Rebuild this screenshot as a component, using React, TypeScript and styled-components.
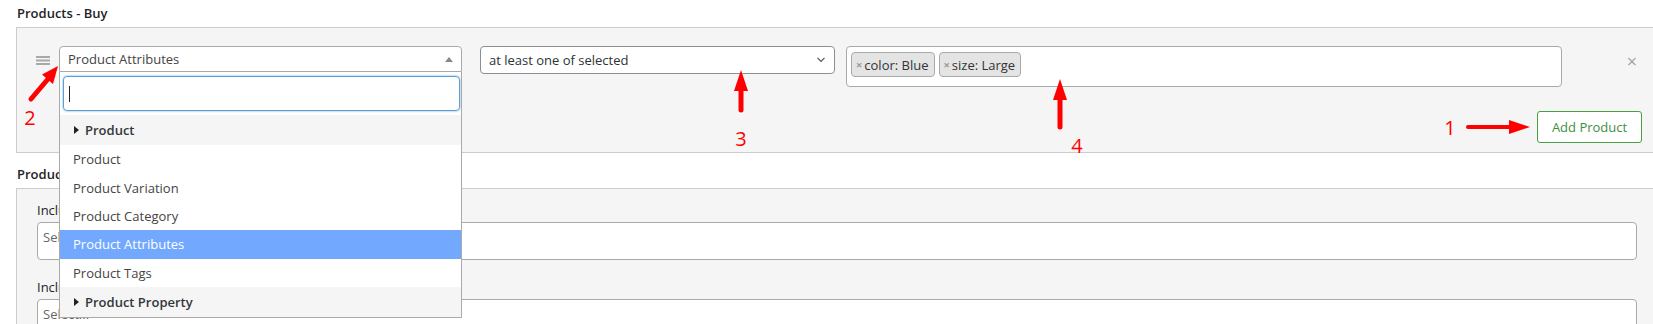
import styled, { createGlobalStyle } from "styled-components";

const GlobalStyle = createGlobalStyle`
  body {
    margin: 0;
    background: #fff;
    font-family: "Open Sans", "Liberation Sans", sans-serif;
    color: #2c3338;
  }
  * { box-sizing: border-box; }
`;

const options = [
  { label: "Product", group: true },
  { label: "Product", group: false },
  { label: "Product Variation", group: false },
  { label: "Product Category", group: false },
  { label: "Product Attributes", group: false, active: true },
  { label: "Product Tags", group: false },
  { label: "Product Property", group: true },
];

const tags = ["color: Blue", "size: Large"];

export default function App() {
  return (
    <>
      <GlobalStyle />
      <Page>
        <SectionTitle>Products - Buy</SectionTitle>
        <Panel>
          <RuleRow>
            <Handle>
              <svg width="14" height="9" viewBox="0 0 14 9">
                <rect x="0" y="0" width="14" height="2" fill="#a7aaad" />
                <rect x="0" y="3.5" width="14" height="2" fill="#a7aaad" />
                <rect x="0" y="7" width="14" height="2" fill="#a7aaad" />
              </svg>
            </Handle>
            <TypeSelect>
              <SelectBox>
                <span>Product Attributes</span>
                <UpArrow />
              </SelectBox>
              <Dropdown>
                <SearchWrap>
                  <Search>
                    <Caret />
                  </Search>
                </SearchWrap>
                {options.map((o, i) =>
                  o.group ? (
                    <GroupRow key={i}>
                      <GroupArrow />
                      {o.label}
                    </GroupRow>
                  ) : (
                    <Option key={i} $active={o.active}>
                      {o.label}
                    </Option>
                  )
                )}
              </Dropdown>
            </TypeSelect>
            <MethodSelect>
              <span>at least one of selected</span>
              <svg width="14" height="14" viewBox="0 0 20 20">
                <path
                  d="M5 7l5 5 5-5"
                  fill="none"
                  stroke="#50575e"
                  strokeWidth="1.8"
                />
              </svg>
            </MethodSelect>
            <MultiSelect>
              {tags.map((t) => (
                <Tag key={t}>
                  <TagRemove>×</TagRemove>
                  {t}
                </Tag>
              ))}
            </MultiSelect>
            <CloseBtn>×</CloseBtn>
          </RuleRow>
          <Footer>
            <AddButton>Add Product</AddButton>
          </Footer>
        </Panel>

        <SectionTitle $gap={8}>Products - Get</SectionTitle>
        <Panel $filters>
          <Field>
            <Label>Include products</Label>
            <Input>Select...</Input>
          </Field>
          <Field $gap={19}>
            <Label>Include categories</Label>
            <Input>Select...</Input>
          </Field>
        </Panel>

        <Annotations width="1653" height="324" viewBox="0 0 1653 324">
          <g fill="#ff0000" stroke="#ff0000" strokeLinecap="round">
            <line x1="31" y1="99" x2="48" y2="79" strokeWidth="5" />
            <polygon points="58,66 42,74.5 53,84" stroke="none" />

            <line x1="741" y1="110" x2="741" y2="88" strokeWidth="5" />
            <polygon points="741,70 734,91 748,91" stroke="none" />

            <line x1="1060" y1="127" x2="1060" y2="97" strokeWidth="5" />
            <polygon points="1060,79 1053,100 1067,100" stroke="none" />

            <line x1="1468" y1="127" x2="1512" y2="127" strokeWidth="4" />
            <polygon points="1530,127 1509,120 1509,134" stroke="none" />
          </g>
          <g
            fill="#ff0000"
            fontFamily="'Open Sans', sans-serif"
            fontSize="20"
            textAnchor="middle"
            dominantBaseline="central"
          >
            <text x="30" y="117">2</text>
            <text x="741" y="138">3</text>
            <text x="1077" y="145">4</text>
            <text x="1450" y="127">1</text>
          </g>
        </Annotations>
      </Page>
    </>
  );
}

const Page = styled.div`
  position: relative;
  width: 1653px;
  height: 324px;
  overflow: hidden;
  padding-left: 16px;
`;

const SectionTitle = styled.div<{ $gap?: number }>`
  margin-top: ${(p) => p.$gap ?? 0}px;
  padding-left: 1px;
  font-size: 13px;
  font-weight: 600;
  line-height: 27px;
  color: #1d2327;
`;

const Panel = styled.div<{ $filters?: boolean }>`
  background: #f5f5f5;
  border: 1px solid #ccc;
  border-right: none;
  padding: ${(p) => (p.$filters ? "13px 0 40px 20px" : "18px 11px 9px 18px")};
`;

const RuleRow = styled.div`
  display: flex;
  align-items: flex-start;
`;

const Handle = styled.div`
  width: 14px;
  height: 9px;
  margin: 10px 9px 0 1px;
  display: flex;
`;

const TypeSelect = styled.div`
  position: relative;
  width: 403px;
  z-index: 5;
`;

const SelectBox = styled.div`
  height: 26px;
  display: flex;
  align-items: center;
  justify-content: space-between;
  padding: 0 8px 0 8px;
  background: #fff;
  border: 1px solid #aaa;
  border-radius: 4px 4px 0 0;
  font-size: 13px;
  color: #444;
`;

const UpArrow = styled.span`
  width: 0;
  height: 0;
  border-left: 4px solid transparent;
  border-right: 4px solid transparent;
  border-bottom: 5px solid #888;
`;

const Dropdown = styled.div`
  position: absolute;
  top: 100%;
  left: 0;
  width: 100%;
  background: #fff;
  border: 1px solid #aaa;
  border-top: none;
`;

const SearchWrap = styled.div`
  padding: 4px 1px 4px 3px;
`;

const Search = styled.div`
  height: 35px;
  border: 1px solid #5b9dd9;
  border-radius: 4px;
  box-shadow: 0 0 2px rgba(30, 140, 190, 0.8);
  padding: 9px 5px;
`;

const Caret = styled.div`
  width: 1px;
  height: 16px;
  background: #222;
`;

const GroupRow = styled.div`
  height: 30px;
  display: flex;
  align-items: center;
  gap: 6px;
  padding-left: 14px;
  background: #f5f5f5;
  font-size: 13px;
  font-weight: 600;
  color: #32373c;
`;

const GroupArrow = styled.span`
  width: 0;
  height: 0;
  border-top: 4px solid transparent;
  border-bottom: 4px solid transparent;
  border-left: 5px solid #222;
`;

const Option = styled.div<{ $active?: boolean }>`
  height: 28.4px;
  display: flex;
  align-items: center;
  padding-left: 13px;
  font-size: 13px;
  background: ${(p) => (p.$active ? "#72a9ff" : "#fff")};
  color: ${(p) => (p.$active ? "#fff" : "#444")};
`;

const MethodSelect = styled.div`
  width: 355px;
  height: 28px;
  margin-left: 18px;
  display: flex;
  align-items: center;
  justify-content: space-between;
  padding: 0 6px 0 8px;
  background: #fff;
  border: 1px solid #8c8f94;
  border-radius: 4px;
  font-size: 13px;
  color: #2c3338;
`;

const MultiSelect = styled.div`
  width: 716px;
  height: 41px;
  margin-left: 11px;
  display: flex;
  align-items: flex-start;
  gap: 4px;
  padding: 5px 4px;
  background: #fff;
  border: 1px solid #aaa;
  border-radius: 4px;
`;

const Tag = styled.span`
  height: 25px;
  display: flex;
  align-items: center;
  padding: 0 5px 0 4px;
  background: #e4e4e4;
  border: 1px solid #aaa;
  border-radius: 4px;
  font-size: 13px;
  color: #333;
`;

const TagRemove = styled.span`
  font-size: 11px;
  font-weight: 700;
  color: #999;
  margin-right: 2px;
`;

const CloseBtn = styled.span`
  width: 20px;
  margin: 6px 0 0 60px;
  text-align: center;
  font-size: 18px;
  line-height: 18px;
  color: #a0a5aa;
`;

const Footer = styled.div`
  display: flex;
  justify-content: flex-end;
  margin-top: 24px;
`;

const AddButton = styled.button`
  width: 105px;
  height: 32px;
  background: #fff;
  border: 1px solid #46a046;
  border-radius: 3px;
  font-family: "Open Sans", "Liberation Sans", sans-serif;
  font-size: 13px;
  color: #3e8f3e;
  padding: 0;
`;

const Field = styled.div<{ $gap?: number }>`
  margin-top: ${(p) => p.$gap ?? 0}px;
`;

const Label = styled.div`
  font-size: 13px;
  line-height: 17px;
  margin-bottom: 3px;
  color: #1d2327;
`;

const Input = styled.div`
  width: 1600px;
  height: 38px;
  background: #fff;
  border: 1px solid #aaa;
  border-radius: 4px;
  padding: 6px 5px;
  font-size: 13px;
  line-height: 16px;
  color: #666;
`;

const Annotations = styled.svg`
  position: absolute;
  top: 0;
  left: 0;
  pointer-events: none;
  z-index: 10;
`;
